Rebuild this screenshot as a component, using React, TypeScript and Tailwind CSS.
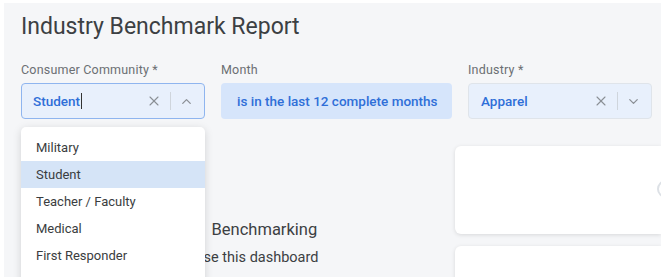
import { X, ChevronUp, ChevronDown } from "lucide-react";

const options = ["Military", "Student", "Teacher / Faculty", "Medical", "First Responder"];

function Label({ children }: { children: React.ReactNode }) {
  return <div className="text-[12.5px] leading-4 tracking-[0.2px] text-[#6b6f73] mb-[5px]">{children}</div>;
}

function Controls({ open }: { open?: boolean }) {
  return (
    <div className="flex items-center gap-[8px] text-[#8a8f95]">
      <X size={16} strokeWidth={1.6} />
      <div className="w-px h-[18px] bg-[#cfd5dc]" />
      {open ? <ChevronUp size={15} strokeWidth={2} /> : <ChevronDown size={15} strokeWidth={2} />}
    </div>
  );
}

export default function App() {
  return (
    <div className="min-h-screen bg-white pt-[3px] pl-[4px] font-['Roboto',sans-serif]">
      <div className="relative h-[274px] overflow-hidden bg-[#f5f6f8] pl-[17px] pt-[10px]">
        <h1 className="text-[23px] leading-7 text-[#3c4043]">Industry Benchmark Report</h1>

        <div className="mt-[21px] flex gap-4">
          <div className="w-[184px]">
            <Label>Consumer Community *</Label>
            <div className="flex h-[36px] items-center justify-between rounded-[4px] border border-[#8fb5ef] bg-[#e8f0fc] pl-[11px] pr-[10px]">
              <span className="text-[13.5px] font-medium text-[#2f6fd8]">
                Student<span className="ml-px inline-block h-[16px] w-px translate-y-[3px] bg-[#333]" />
              </span>
              <Controls open />
            </div>
          </div>
          <div className="w-[231px]">
            <Label>Month</Label>
            <div className="flex h-[36px] items-center rounded-[4px] bg-[#d6e5fb] pl-[16px]">
              <span className="text-[13.5px] font-medium text-[#2f6fd8]">is in the last 12 complete months</span>
            </div>
          </div>
          <div className="w-[184px]">
            <Label>Industry *</Label>
            <div className="flex h-[36px] items-center justify-between rounded-[4px] border border-[#dfe4ea] bg-[#e8f0fc] pl-[12px] pr-[10px]">
              <span className="text-[13.5px] font-medium text-[#2f6fd8]">Apparel</span>
              <Controls />
            </div>
          </div>
        </div>

        <div className="mt-[27px] flex">
          <div className="w-[434px] text-[#3c4043]">
            <h2 className="mt-[72px] pl-[121px] text-[16.5px] leading-6">
              <span className="mr-[6px]">Industry</span> Benchmarking
            </h2>
            <p className="mt-[4px] pl-[125px] text-[14.5px] leading-6">How to use this dashboard</p>
          </div>
          <div className="flex flex-1 flex-col gap-[12px]">
            <div className="relative h-[88px] rounded-l-[6px] bg-white shadow-[0_1px_4px_rgba(0,0,0,0.12)]">
              <div className="absolute left-[202px] top-[34px] h-[18px] w-[18px] rounded-full border-2 border-[#dde1e6]" />
            </div>
            <div className="h-[88px] rounded-l-[6px] bg-white shadow-[0_1px_4px_rgba(0,0,0,0.12)]" />
          </div>
        </div>

        <div className="absolute left-[17px] top-[124px] h-[160px] w-[184px] rounded-[5px] bg-white pt-[7px] shadow-[0_2px_8px_rgba(0,0,0,0.15)]">
          {options.map((o) => (
            <div
              key={o}
              className={`flex h-[27px] items-center pl-[15px] text-[13px] text-[#3a3d40] ${o === "Student" ? "bg-[#d5e4f7]" : ""}`}
            >
              {o}
            </div>
          ))}
        </div>
      </div>
    </div>
  );
}
